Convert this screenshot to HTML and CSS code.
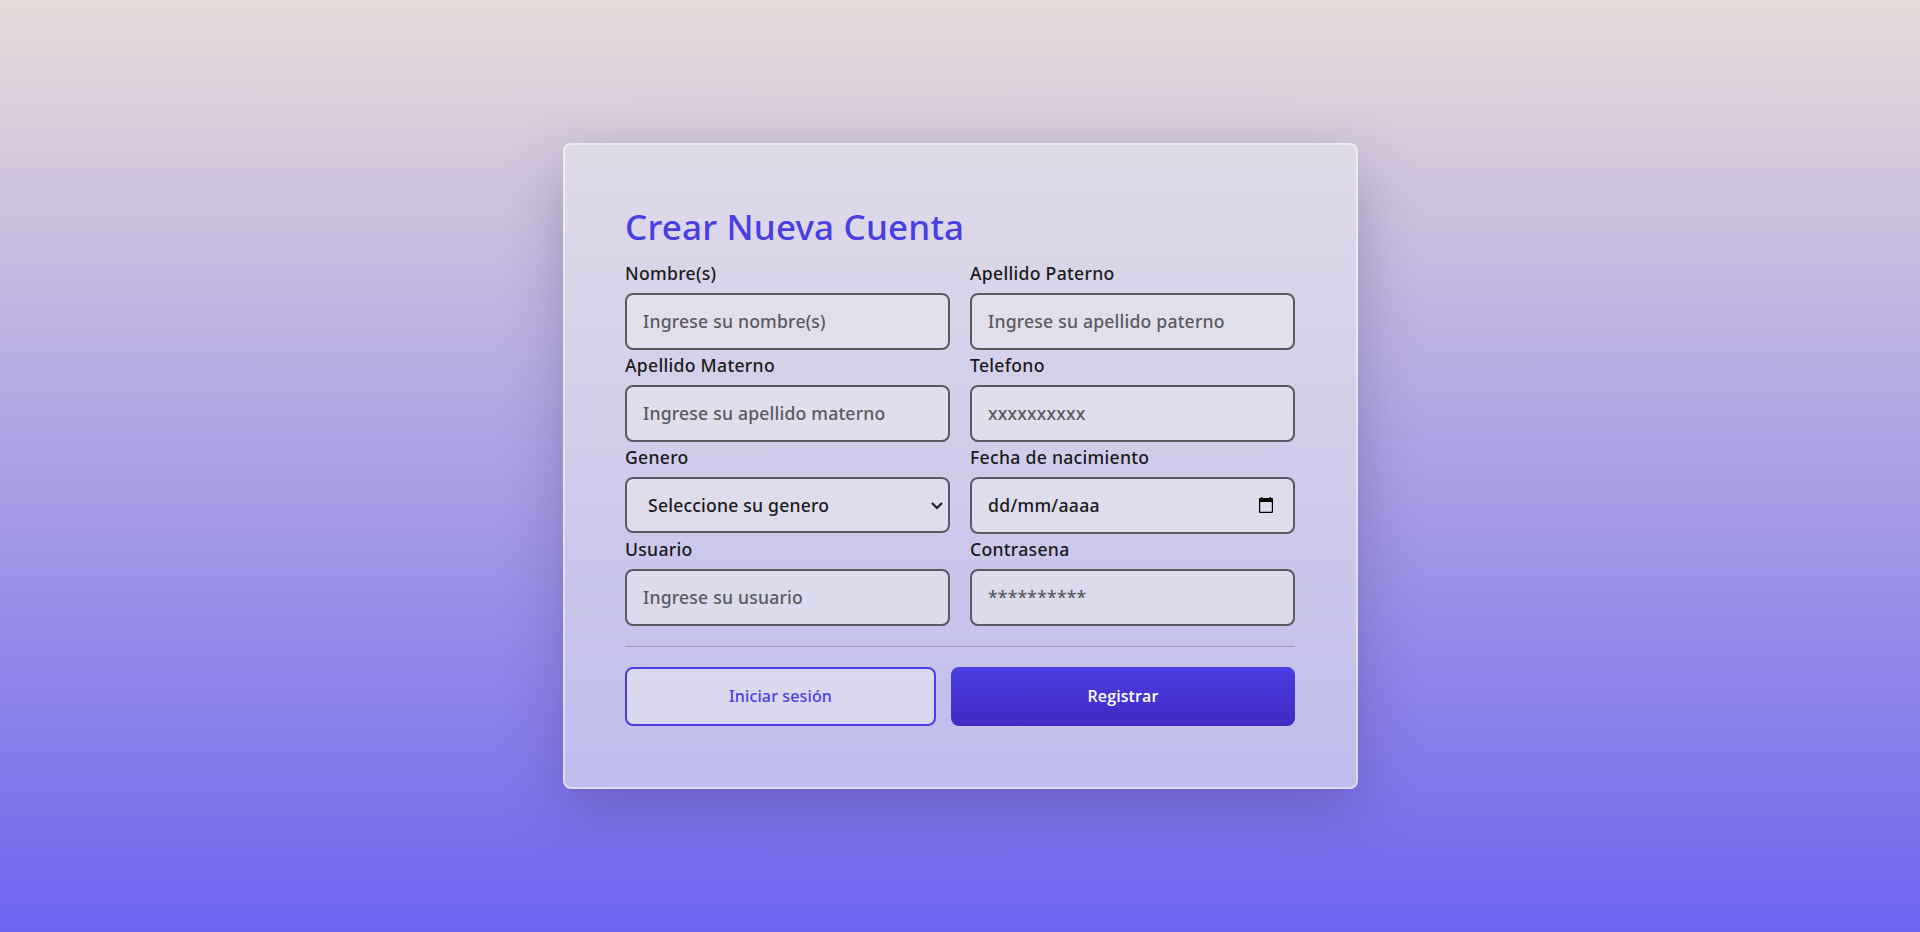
FILE: index.html
```html
<!DOCTYPE html>
<html lang="es">
<head>
<meta charset="utf-8">
<title>Crear Nueva Cuenta</title>
<link rel="stylesheet" href="styles.css">
</head>
<body>
<main class="card">
  <h1 class="title">Crear Nueva Cuenta</h1>
  <form class="form">
    <div class="grid">
      <div class="field"><label class="label" for="nombre">Nombre(s)</label><input class="input" id="nombre" type="text" placeholder="Ingrese su nombre(s)"></div>
      <div class="field"><label class="label" for="paterno">Apellido Paterno</label><input class="input" id="paterno" type="text" placeholder="Ingrese su apellido paterno"></div>
      <div class="field"><label class="label" for="materno">Apellido Materno</label><input class="input" id="materno" type="text" placeholder="Ingrese su apellido materno"></div>
      <div class="field"><label class="label" for="telefono">Telefono</label><input class="input" id="telefono" type="tel" placeholder="xxxxxxxxxx"></div>
      <div class="field"><label class="label" for="genero">Genero</label>
        <div class="select-wrap">
          <select class="input select" id="genero"><option>Seleccione su genero</option></select>
          <svg class="chevron" width="12" height="8" viewBox="0 0 12 8" fill="none" stroke="#1a1a1a" stroke-width="2"><path d="M1 1l5 5 5-5"/></svg>
        </div>
      </div>
      <div class="field"><label class="label" for="fecha">Fecha de nacimiento</label>
        <div class="input date" id="fecha" tabindex="0"><span>dd/mm/aaaa</span>
          <svg class="calendar" width="14" height="16" viewBox="0 0 14 16"><path fill-rule="evenodd" d="M2 0h1.500v1h7V0H12v1h1q1 0 1 1v13q0 1-1 1H1q-1 0-1-1V2q0-1 1-1h1zM1.200 5v9.800h11.600V5z"/></svg>
        </div>
      </div>
      <div class="field"><label class="label" for="usuario">Usuario</label><input class="input" id="usuario" type="text" placeholder="Ingrese su usuario"></div>
      <div class="field"><label class="label" for="contrasena">Contrasena</label><input class="input" id="contrasena" type="password" placeholder="**********"></div>
    </div>
    <div class="actions">
      <button class="button secondary" type="button">Iniciar sesión</button>
      <button class="button primary" type="button">Registrar</button>
    </div>
  </form>
</main>
</body>
</html>
```

FILE: styles.css
```css
* { box-sizing: border-box; }

body {
  margin: 0;
  height: 100vh;
  display: flex;
  align-items: center;
  justify-content: center;
  font-family: "Noto Sans", sans-serif;
  color: #1a1a1a;
  background: linear-gradient(180deg, #e7dcda 0%, #d6cadd 15%, #6d64f0 100%);
}

.card {
  width: 795px;
  height: 646px;
  margin-left: 1px;
  padding: 61px 61px 60px 60px;
  border: 2px solid rgba(255, 255, 255, 0.45);
  border-radius: 8px;
  background: rgba(228, 229, 238, 0.64);
  box-shadow: 0 20px 60px rgba(45, 35, 85, 0.28);
}

.title {
  margin: 0 0 11px;
  font-size: 35px;
  line-height: 42px;
  font-weight: 500;
  letter-spacing: 0.180px;
  color: #4a3ee3;
}

.grid {
  display: grid;
  grid-template-columns: 1fr 1fr;
  column-gap: 20px;
}

.field { height: 92px; }

.label {
  display: block;
  height: 27px;
  margin-bottom: 7px;
  padding-top: 1px;
  font-size: 17.600px;
  line-height: 27px;
  font-weight: 500;
  letter-spacing: 0.290px;
}

.input {
  display: block;
  width: 100%;
  height: 57px;
  padding: 12px 16px 14px;
  border: 2px solid #5a595f;
  border-radius: 8px;
  background: rgba(233, 231, 238, 0.6);
  font: 500 17.600px "Noto Sans", sans-serif;
  letter-spacing: 0.200px;
  color: #1a1a1a;
}

.input::placeholder { color: #5a595f; opacity: 1; }

.select-wrap { display: grid; }

.select-wrap > * { grid-area: 1 / 1; }

.select {
  height: 56px;
  padding: 13px 16px 13px 21px;
  appearance: none;
}

.chevron {
  align-self: center;
  justify-self: end;
  margin: 1px 7px 0 0;
  pointer-events: none;
}

.date {
  display: flex;
  align-items: center;
  justify-content: space-between;
  letter-spacing: 0.290px;
}

.calendar { margin-right: 4px; }

.actions {
  display: grid;
  grid-template-columns: 311px 1fr;
  column-gap: 15px;
  margin-top: 19px;
  padding-top: 20px;
  border-top: 1px solid #a098be;
}

.button {
  height: 59px;
  padding: 0 6px 2px;
  border: 0;
  border-radius: 8px;
  font: 500 16px "Noto Sans", sans-serif;
}

.secondary {
  border: 2px solid #4a3ee3;
  background: rgba(233, 231, 238, 0.6);
  color: #4a3ee3;
  letter-spacing: 0.130px;
}

.primary {
  background: linear-gradient(#4a3ee3, #4129c3);
  color: #fff;
  font-family: "Open Sans", sans-serif;
  font-weight: 600;
  letter-spacing: 0.120px;
}
```
